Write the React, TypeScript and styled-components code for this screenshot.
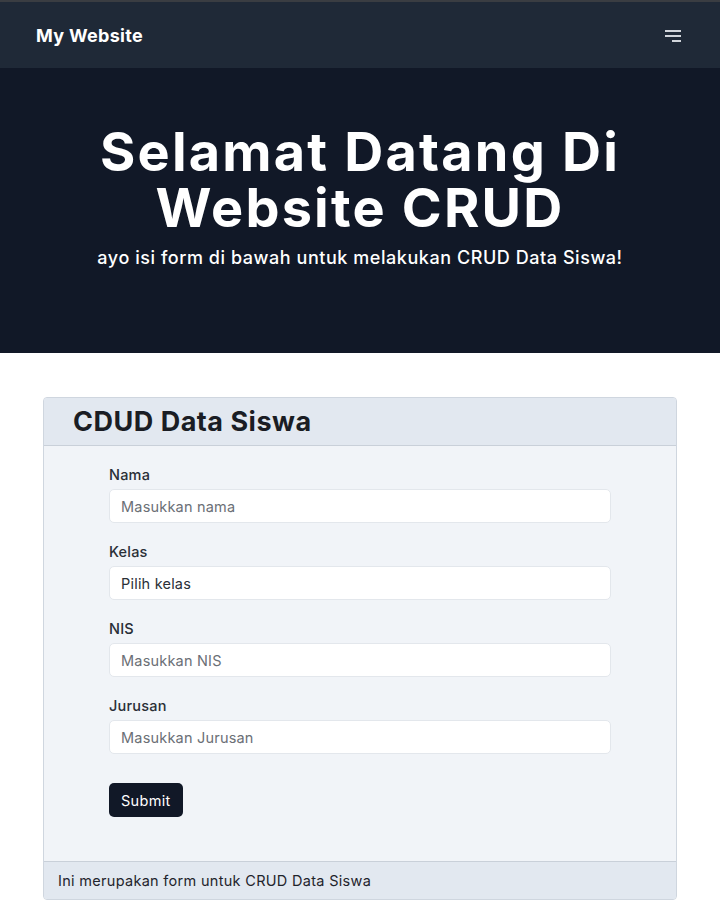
import React from "react";
import styled, { createGlobalStyle } from "styled-components";

const Global = createGlobalStyle`
  html, body { margin: 0; padding: 0; background: #ffffff; }
  body { font-family: Inter, "Open Sans", sans-serif; color: #1f2937; }
  * { box-sizing: border-box; }
`;

const TopLine = styled.div`
  height: 2px;
  background: #3a3d42;
`;

const Nav = styled.nav`
  height: 66px;
  background: #1f2937;
  display: flex;
  align-items: center;
  justify-content: space-between;
  padding: 0 38px 0 36px;
`;

const Brand = styled.span`
  color: #ffffff;
  font-weight: 700;
  font-size: 18px;
  letter-spacing: 0.3px;
`;

const MenuButton = styled.button`
  background: none;
  border: none;
  padding: 0;
  width: 18px;
  height: 16px;
  display: flex;
  align-items: center;
  justify-content: center;
`;

const Hero = styled.header`
  background: #111827;
  height: 285px;
  display: flex;
  flex-direction: column;
  align-items: center;
  padding-top: 56px;
  color: #ffffff;
  text-align: center;
`;

const Title = styled.h1`
  margin: 0;
  font-size: 54px;
  line-height: 56px;
  font-weight: 700;
  letter-spacing: 2.2px;
`;

const Subtitle = styled.p`
  margin: 10px 0 0;
  font-size: 18px;
  font-weight: 500;
  line-height: 24px;
  letter-spacing: 0.55px;
`;

const Main = styled.main`
  padding: 44px 43px 11px;
`;

const Card = styled.section`
  border: 1px solid #cfd6df;
  border-radius: 4px;
  overflow: hidden;
  background: #f1f4f8;
`;

const CardHeader = styled.div`
  background: #e2e8f0;
  border-bottom: 1px solid #c9d0d9;
  height: 48px;
  display: flex;
  align-items: center;
  padding-left: 29px;
`;

const CardTitle = styled.h2`
  margin: 0;
  font-size: 27px;
  font-weight: 700;
  color: #1a1d24;
  letter-spacing: 0.5px;
`;

const Form = styled.form`
  padding: 19px 65px 44px;
  display: flex;
  flex-direction: column;
  gap: 19px;
`;

const Field = styled.div`
  display: flex;
  flex-direction: column;
  gap: 4px;
`;

const Label = styled.label`
  font-size: 14.5px;
  font-weight: 500;
  color: #2a2f37;
  line-height: 20px;
  letter-spacing: 0.2px;
`;

const Input = styled.input`
  height: 34px;
  border: 1px solid #e3e7ec;
  border-radius: 5px;
  background: #ffffff;
  padding: 0 11px;
  font-family: inherit;
  font-size: 14.5px;
  letter-spacing: 0.2px;
  color: #1f2937;
  &::placeholder { color: #6b6f76; }
`;

const SelectBox = styled.div`
  height: 34px;
  border: 1px solid #e3e7ec;
  border-radius: 5px;
  background: #ffffff;
  padding: 0 11px;
  display: flex;
  align-items: center;
  font-size: 14.5px;
  letter-spacing: 0.2px;
  color: #2a2f37;
`;

const SubmitButton = styled.button`
  align-self: flex-start;
  margin-top: 10px;
  height: 34px;
  padding: 0 12px;
  border: none;
  border-radius: 5px;
  background: #111827;
  color: #ffffff;
  font-family: inherit;
  font-size: 14.5px;
  font-weight: 400;
  letter-spacing: 0.3px;
`;

const CardFooter = styled.div`
  background: #e2e8f0;
  border-top: 1px solid #c9d0d9;
  height: 38px;
  display: flex;
  align-items: center;
  padding-left: 14px;
  font-size: 14.5px;
  letter-spacing: 0.3px;
  color: #1f242c;
`;

export default function App() {
  return (
    <>
      <Global />
      <TopLine />
      <Nav>
        <Brand>My Website</Brand>
        <MenuButton aria-label="menu">
          <svg width="18" height="16" viewBox="0 0 18 16">
            <rect x="1" y="3" width="16" height="2" fill="#d1d5db" />
            <rect x="1" y="8" width="16" height="2" fill="#d1d5db" />
            <rect x="8" y="13" width="9" height="2" fill="#d1d5db" />
          </svg>
        </MenuButton>
      </Nav>
      <Hero>
        <Title>
          Selamat Datang Di
          <br />
          Website CRUD
        </Title>
        <Subtitle>ayo isi form di bawah untuk melakukan CRUD Data Siswa!</Subtitle>
      </Hero>
      <Main>
        <Card>
          <CardHeader>
            <CardTitle>CDUD Data Siswa</CardTitle>
          </CardHeader>
          <Form onSubmit={(e) => e.preventDefault()}>
            <Field>
              <Label>Nama</Label>
              <Input placeholder="Masukkan nama" />
            </Field>
            <Field>
              <Label>Kelas</Label>
              <SelectBox>Pilih kelas</SelectBox>
            </Field>
            <Field>
              <Label>NIS</Label>
              <Input placeholder="Masukkan NIS" />
            </Field>
            <Field>
              <Label>Jurusan</Label>
              <Input placeholder="Masukkan Jurusan" />
            </Field>
            <SubmitButton type="submit">Submit</SubmitButton>
          </Form>
          <CardFooter>Ini merupakan form untuk CRUD Data Siswa</CardFooter>
        </Card>
      </Main>
    </>
  );
}
